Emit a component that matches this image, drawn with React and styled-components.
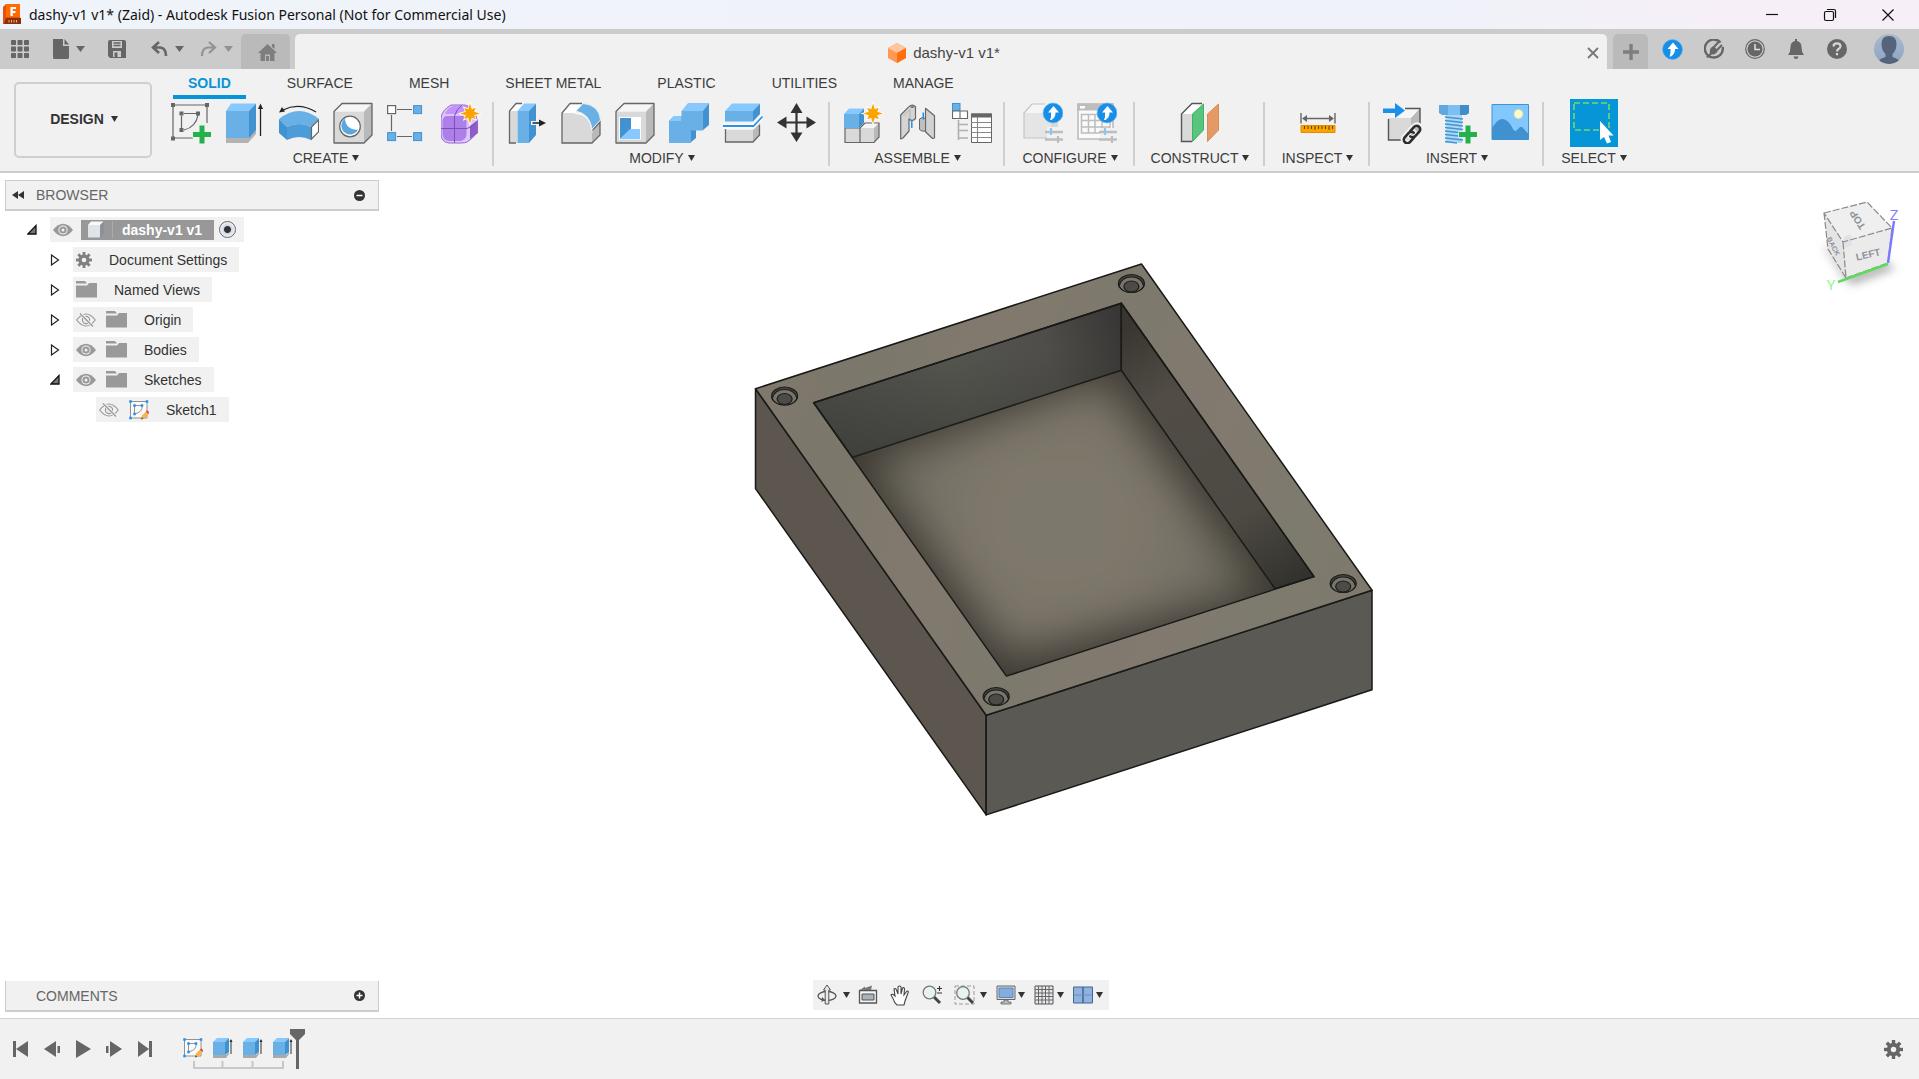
import React from 'react';
import styled, { createGlobalStyle } from 'styled-components';

const Global = createGlobalStyle`
  *, *::before, *::after { box-sizing: border-box; }
  html, body { margin: 0; height: 100%; }
  #root { height: 100%; }
  body { font-family: "Liberation Sans", Arial, sans-serif; font-size: 14px; color: #333; overflow: hidden; }
  button, input { font: inherit; color: inherit; }
  svg { display: block; flex: none; }
`;

const Shell = styled.div`
  height: 100vh;
  display: flex;
  flex-direction: column;
  background: #fff;
`;

const PlainButton = styled.button`
  border: 0;
  padding: 0;
  margin: 0;
  background: none;
  display: flex;
  align-items: center;
  justify-content: center;
`;

/* ---------- window title bar ---------- */
const TitleBar = styled.header`
  height: 29px;
  flex: none;
  display: flex;
  align-items: center;
  gap: 7px;
  padding: 0 2px 0 3px;
  background: linear-gradient(90deg, #eff3fa 0%, #f0f2f9 75%, #f6eff7 90%);
`;
const WindowTitle = styled.h1`
  margin: 0;
  flex: 1;
  font: 400 14px/20px "Noto Sans", "Open Sans", sans-serif;
  color: #111;
  white-space: nowrap;
`;
const WindowButtons = styled.div`
  display: flex;
`;
const WindowButton = styled(PlainButton)`
  width: 58px;
  height: 29px;
`;

/* ---------- document bar ---------- */
const DocBar = styled.div`
  height: 40px;
  flex: none;
  display: flex;
  align-items: flex-end;
  background: #cbcbcb;
  color: #666;
`;
const QuickTools = styled.div`
  height: 40px;
  width: 241px;
  display: flex;
  align-items: center;
  padding-left: 10px;
  color: #666;
`;
const QuickButton = styled(PlainButton)`
  width: ${p => p.$w || 20}px;
  height: 24px;
  gap: ${p => p.$inner || 0}px;
  margin-right: ${p => p.$gap || 0}px;
  color: ${p => (p.$dim ? '#929292' : '#666')};
`;
const SmallTab = styled(PlainButton)`
  height: 35px;
  width: ${p => p.$w}px;
  padding-left: ${p => p.$pad || 0}px;
  border-radius: 5px 5px 0 0;
  background: #bababa;
  color: #7e7e7e;
`;
const DocTab = styled.div`
  flex: 1;
  height: 35px;
  margin: 0 6px 0 5px;
  border-radius: 5px 5px 0 0;
  background: #f1f1f1;
  display: flex;
  align-items: center;
  padding: 2px 6px 0 8px;
`;
const DocName = styled.div`
  flex: 1;
  display: flex;
  align-items: center;
  justify-content: center;
  gap: 7px;
  font-size: 15px;
  line-height: 20px;
  color: #444;
`;
const CloseTab = styled(PlainButton)`
  width: 16px;
  height: 20px;
`;
const StatusIcons = styled.div`
  height: 40px;
  display: flex;
  align-items: center;
  padding: 0 15px 0 14px;
`;
const StatusButton = styled(PlainButton)`
  width: 21px;
  height: 24px;
  margin-right: 20px;
  color: #666;
`;
const Avatar = styled(PlainButton)`
  width: 30px;
  height: 30px;
  margin-left: 7px;
`;

/* ---------- ribbon ---------- */
const Ribbon = styled.div`
  flex: none;
  height: 104px;
  display: flex;
  background: #f1f1f1;
  border-bottom: 2px solid #cdcdcd;
`;
const Workspace = styled(PlainButton)`
  width: 138px;
  height: 76px;
  margin: 13px 19px 0 14px;
  padding: 0 0 2px 2px;
  gap: 7px;
  border: 2px solid #cfcfcf;
  border-radius: 5px;
  font-weight: 700;
  color: #333;
`;
const RibbonBody = styled.div`
  flex: 1;
  min-width: 0;
`;
const RibbonTabs = styled.nav`
  display: flex;
  gap: 26px;
  padding-left: 2px;
`;
const RibbonTab = styled(PlainButton)`
  height: 30px;
  padding: 2px 15px 0;
  font-weight: ${p => (p.$on ? 700 : 400)};
  color: ${p => (p.$on ? '#0696d7' : '#3c3c3c')};
  border-bottom: 4px solid ${p => (p.$on ? '#0696d7' : 'transparent')};
  white-space: nowrap;
`;
const Groups = styled.div`
  display: flex;
  align-items: center;
  height: 70px;
`;
const Group = styled.section`
  padding: 0 11px 0 ${p => (p.$first ? 0 : 13)}px;
`;
const GroupInner = styled.div`
  min-width: ${p => p.$min || 0}px;
  display: flex;
  flex-direction: column;
  align-items: center;
`;
const Divider = styled.div`
  width: 2px;
  height: 64px;
  background: #cfcfcf;
`;
const ToolRow = styled.div`
  height: 48px;
  display: flex;
  align-items: center;
  gap: 14px;
`;
const Tool = styled(PlainButton)`
  width: ${p => (p.$big ? 48 : 40)}px;
  height: ${p => (p.$big ? 48 : 42)}px;
  background: ${p => (p.$big ? '#0696d7' : 'none')};
`;
const GroupLabel = styled(PlainButton)`
  height: 22px;
  gap: 4px;
  color: #3c3c3c;
  white-space: nowrap;
`;

/* ---------- canvas ---------- */
const Canvas = styled.main`
  flex: 1;
  min-height: 0;
  position: relative;
  display: grid;
  grid-template-columns: 374px 1fr 374px;
  padding: 7px 5px 6px;
`;
const Model = styled.svg`
  position: absolute;
  left: calc(50% - 207px);
  top: 89px;
`;
const LeftDock = styled.aside`
  display: flex;
  flex-direction: column;
  justify-content: space-between;
  position: relative;
`;
const PanelHead = styled.div`
  height: 31px;
  display: flex;
  align-items: center;
  padding: 0 13px 0 6px;
  background: #f1f1f1;
  border: 1px solid #cdcdcd;
  border-top-width: ${p => (p.$open ? 1 : 0)}px;
  border-bottom-width: 2px;
  color: #666;
`;
const PanelTitle = styled.h2`
  margin: 0;
  flex: 1;
  padding-left: ${p => (p.$pad ? 24 : 12)}px;
  font-size: 14px;
  font-weight: 400;
  line-height: 20px;
`;
const Tree = styled.ul`
  list-style: none;
  margin: 0;
  padding: 6px 0 0;
  display: flex;
  flex-direction: column;
  gap: 5px;
`;
const TreeItem = styled.li`
  display: flex;
  align-items: center;
  height: 25px;
  padding-left: ${p => 20 + p.$level * 23}px;
`;
const Twisty = styled(PlainButton)`
  width: 14px;
  height: 20px;
  margin-right: 11px;
`;
const TreeCells = styled.div`
  height: 25px;
  display: flex;
  align-items: center;
  gap: ${p => (p.$root ? 8 : 10)}px;
  padding: 0 ${p => (p.$root ? 7 : 12)}px 0 3px;
  background: #f1f1f1;
  color: #333;
`;
const TreeName = styled.span`
  padding-left: 7px;
  line-height: 20px;
  white-space: nowrap;
`;
const Selected = styled.div`
  height: 20px;
  display: flex;
  align-items: center;
  background: #989898;
  color: #fff;
  font-weight: 700;
`;
const SelectedIcon = styled.span`
  width: 32px;
  padding-left: 6px;
  border-right: 1px solid #ababab;
`;
const SelectedName = styled.span`
  padding: 0 12px 0 9px;
  line-height: 20px;
  white-space: nowrap;
`;
const Radio = styled.input`
  appearance: none;
  width: 17px;
  height: 17px;
  margin: 0 1px 0 -3px;
  border: 1px solid #666;
  border-radius: 50%;
  background: radial-gradient(circle, #333 0 3px, #cfd9e6 4px, #f5f7fa 8px);
`;
const CenterDock = styled.div`
  display: flex;
  align-items: flex-end;
  justify-content: center;
  position: relative;
  padding: 0 0 2px 3px;
`;
const NavBar = styled.div`
  height: 30px;
  display: flex;
  align-items: center;
  padding: 0 6px 0 4px;
  background: #f1f1f1;
`;
const NavButton = styled(PlainButton)`
  height: 26px;
  gap: ${p => p.$inner || 0}px;
  margin-right: ${p => p.$gap || 0}px;
`;
const RightDock = styled.aside`
  display: flex;
  justify-content: flex-end;
  align-items: flex-start;
  position: relative;
`;

/* ---------- timeline ---------- */
const Timeline = styled.footer`
  flex: none;
  height: 61px;
  display: flex;
  align-items: center;
  background: #f1f1f1;
  border-top: 1px solid #d2d2d2;
  padding: 0 16px 0 13px;
  color: #666;
`;
const Playback = styled.div`
  display: flex;
  gap: 15px;
  margin-right: 30px;
`;
const PlayButton = styled(PlainButton)`
  width: 16px;
  height: 20px;
`;
const Track = styled.div`
  flex: 1;
  display: flex;
  align-items: flex-start;
  height: 40px;
`;
const Features = styled.div`
  display: flex;
  flex-direction: column;
  margin-right: -3px;
`;
const FeatureRow = styled.div`
  display: flex;
  gap: 10px;
  height: 32px;
  align-items: center;
  padding-top: 6px;
`;

/* ---------- drawings ---------- */
const F = '#69b0e6', T = '#87c9ff', S = '#4192d0', G = '#d9d9d9', L = '#f6f6f6', D = '#b9b9b9', K = '#666';

const Svg = ({ w = 40, h = w, vb, children }) => (
  <svg width={w} height={h} viewBox={vb || `0 0 ${w} ${h}`} fill="none" aria-hidden="true">{children}</svg>
);
const Caret = ({ w = 7, h = 6, c = 'currentColor' }) => (
  <Svg w={w} h={h}><path d={`M0 0H${w}L${w / 2} ${h}Z`} fill={c} /></Svg>
);
const starPath = (cx, cy, r, q) => {
  const pts = [];
  for (let i = 0; i < 16; i++) {
    const a = (i * Math.PI) / 8 - Math.PI / 2;
    const k = i % 2 ? q : i % 4 ? r * 0.82 : r;
    pts.push(`${(cx + k * Math.cos(a)).toFixed(1)} ${(cy + k * Math.sin(a)).toFixed(1)}`);
  }
  return `M${pts.join('L')}Z`;
};
const Star = ({ x, y }) => <path d={starPath(x, y, 10, 4.6)} fill="#fba401" stroke="#fff" strokeWidth="1.500" paintOrder="stroke" />;
const Plus = ({ x, y }) => (
  <path d={`M${x - 2.5} ${y - 9}h5v6.5h6.5v5h-6.5v6.5h-5v-6.5h-6.5v-5h6.5Z`} fill="#23b14d" stroke="#f1f1f1" strokeWidth="1.500" paintOrder="stroke" />
);
const UpBadge = ({ x, y, r = 10 }) => (
  <g>
    <circle cx={x} cy={y} r={r} fill="#178fe8" stroke="#6db6ee" strokeWidth=".6" />
    <path d={`M${x + .5} ${y - 7}l5.5 6.5h-3.5q.2 5-4 7.500h-1.500q1.500-3 1-7.500h-3Z`} fill="#fff" />
  </g>
);
const sq = (x, y, f, s = 4) => <rect x={x - s / 2} y={y - s / 2} width={s} height={s} fill={f} />;

const SketchIcon = () => (
  <Svg w={40} h={42}>
    <path d="M4 3H34M2 5V36H22M36 5V21M13 11.500H25M10.500 14V26M27 13Q25 25 13 28" stroke={K} strokeWidth="1.200" />
    {sq(2, 3, K)}{sq(36, 3, K)}{sq(2, 36.5, K)}{sq(10.5, 11.5, K)}{sq(27, 11.5, K)}{sq(10.5, 28, K)}
    <Plus x={31} y={32.500} />
  </Svg>
);
const ExtrudeIcon = () => (
  <Svg w={40} h={42}>
    <path d="M1 36H23L31 27V32L23 41H1Z" fill="#b3b3b3" />
    <path d="M1 9H24V36H1Z" fill={F} /><path d="M1 9L6 1.500H31L24 9Z" fill={T} /><path d="M24 9L31 1.500V28L24 36Z" fill={S} />
    <path d="M35.500 34V5" stroke="#222" strokeWidth="1.300" /><path d="M35.500 1.500L33 7H38Z" fill="#222" />
  </Svg>
);
const RevolveIcon = () => (
  <Svg w={40} h={42}>
    <path d="M0 17Q20 1 40 17L32 25Q20 19 8 25Z" fill={F} />
    <path d="M0 17L8 25V38L0 31Z" fill={S} />
    <path d="M8 25Q20 19 32 25V38Q20 32 8 38Z" fill="#4b9cd9" />
    <path d="M32.500 25L39.500 18V30L32.500 37Z" fill="#fff" stroke={K} strokeWidth="1.200" />
    <path d="M37 10Q20 0 4 8" stroke="#222" strokeWidth="1.300" /><path d="M0 10.500L3 5L6 9.500Z" fill="#222" />
  </Svg>
);
const boxFrame = (
  <g>
    <path d="M1 9.500H31V41H1Z" fill={G} /><path d="M1 9.500L9 1.500H39L31 9.500Z" fill={L} /><path d="M31 9.500L39 1.500V33L31 41Z" fill={D} />
    <path d="M1 9.500L9 1.500H39V33L31 41H1Z" stroke={K} strokeWidth="1.300" strokeLinejoin="round" />
  </g>
);
const HoleIcon = () => (
  <Svg w={40} h={42}>{boxFrame}
    <circle cx="17" cy="24.500" r="10.300" fill="#fff" stroke={K} strokeWidth="1.200" />
    <path d="M12 16.800A8.700 8.700 0 1 0 25 27.500A11 11 0 0 1 12 16.800Z" fill="#5aa7e0" />
  </Svg>
);
const PatternIcon = () => (
  <Svg w={40} h={42}>
    <path d="M10 7.500H25M4.500 13V29M10 34.500H25" stroke={K} strokeWidth="1.200" />
    <rect x=".6" y="3.600" width="8" height="8" fill="#fff" stroke={K} strokeWidth="1.200" />
    <rect x="26.600" y="3.600" width="8" height="8" fill={F} stroke={S} /><rect x=".6" y="30.600" width="8" height="8" fill={F} stroke={S} />
    <rect x="26.600" y="30.600" width="8" height="8" fill={F} stroke={S} />
  </Svg>
);
const FormIcon = () => (
  <Svg w={40} h={42}>
    <path d="M0 16Q1 8 10 3H24Q34 5 36 18V31Q31 37 26 40Q24 41 20 41H8Q0 40 0 32Z" fill="#dcc6fb" />
    <path d="M4 12Q6 6 12 4H30Q26 8 24 12Z" fill="#c294fb" />
    <path d="M5 14H22Q25.500 15 25.500 20V33Q24 39 18 39H8Q1.500 38 1.500 31V19Q2 15 5 14Z" fill="#ad7fe8" />
    <path d="M29 24L37 18V31L29 37Z" fill="#8d5cc8" />
    <path d="M13.500 41V14Q15 8 21 3M0 26.500H26Q31 25 36 20" stroke="#7d4fb5" strokeWidth="1" />
    <path d="M0 16Q1 8 10 3H24Q34 5 36 18V31Q31 37 26 40Q24 41 20 41H8Q0 40 0 32Z" stroke="#9566d0" />
    <Star x={29} y={11.500} />
  </Svg>
);
const PressPullIcon = () => (
  <Svg w={40} h={42}>
    <path d="M2.500 9L9 2H17L10 9V41H2.500Z" fill={G} /><path d="M2.500 9L9 2H17L10 9Z" fill="#fff" />
    <path d="M15 1.500H9L2.500 9V41H9" stroke={K} strokeWidth="1.300" />
    <path d="M10.500 9H22V41H10.500Z" fill={F} /><path d="M10.500 9L17 1.500H29L22 9Z" fill={T} /><path d="M22 9L29 1.500V33L22 41Z" fill={S} />
    <path d="M24 21H33" stroke="#f1f1f1" strokeWidth="4" /><path d="M25.500 21H34" stroke="#222" strokeWidth="1.500" /><path d="M32 17.500L39 21L32 24.500Z" fill="#222" />
  </Svg>
);
const FilletIcon = () => (
  <Svg w={40} h={42}>
    <path d="M1 11L9 1.500H22L14 11Z" fill="#fff" /><path d="M1 11H13Q30 12 31 31V41H1Z" fill={G} /><path d="M31 31L39 20V32L31 41Z" fill={D} />
    <path d="M21 1.500H9L1 11V41H31L39 33V20L31 29" stroke={K} strokeWidth="1.300" /><path d="M13 11Q30 12 31 29" stroke="#fff" strokeWidth="1" />
    <path d="M15 9L22 1.500Q38 3 39.500 18L31 27Q29 12 15 9Z" fill={F} stroke="#f1f1f1" strokeWidth=".8" />
  </Svg>
);
const ShellIcon = () => (
  <Svg w={40} h={42}>{boxFrame}
    <path d="M4 15H26V37.500H4Z" fill="#fff" /><path d="M5 16H16V27L5 37Z" fill={S} /><path d="M15 27H25V37H5Z" fill={T} />
  </Svg>
);
const CombineIcon = () => (
  <Svg w={40} h={42}>
    <path d="M0 19L5 14H13V9L19 1.500H40V23L34 28H27V36L21 41H0Z" fill={S} />
    <path d="M0 19H12.500V9H34V28.500H22V41H0Z" fill={F} /><path d="M0 19L5 14H12.500V19ZM12.500 9L19 1.500H40L34 9Z" fill={T} />
  </Svg>
);
const SplitIcon = () => (
  <Svg w={40} h={42}>
    <path d="M2 28H30V40H2Z" fill={G} /><path d="M30 28L37 21V33L30 40Z" fill={D} /><path d="M2.500 27V40H30L36.500 33V23" stroke={K} strokeWidth="1.300" />
    <path d="M2 9H30V19.500H2Z" fill={F} /><path d="M2 9L9 1.500H37L30 9Z" fill={T} /><path d="M30 9L37 1.500V12L30 19.500Z" fill={S} />
    <path d="M0 24H30.500L39.500 14.500" stroke="#fff" strokeWidth="5" /><path d="M0 24H30.500L39.500 14.500" stroke="#2b93e3" strokeWidth="1.800" />
  </Svg>
);
const MoveIcon = () => (
  <Svg w={40} h={42}>
    <path d="M19.500 8V34M7 20.500H33" stroke="#333" strokeWidth="2.200" />
    <path d="M19.500 1L25.500 11H13.500ZM19.500 40L25.500 30.500H13.500ZM0 20.500L9.500 14.500V26.500ZM39 20.500L29.500 14.500V26.500Z" fill="#333" />
  </Svg>
);
const ComponentIcon = () => (
  <Svg w={40} h={42}>
    <path d="M1 26H30V40.500H1Z" fill={G} /><path d="M16 26L21 21H35L30 26Z" fill={L} /><path d="M30 26L35 21V35L30 40.500Z" fill={D} />
    <path d="M1 26V40.500H30L35 35V21H21L16 26V40.500M1 26H16" stroke={K} strokeWidth="1.200" />
    <path d="M0 12H15V26H0Z" fill={F} /><path d="M0 12L5 6.500H20L15 12Z" fill={T} /><path d="M15 12L20 6.500V21L15 26Z" fill={S} />
    <Star x={29} y={11.500} />
  </Svg>
);
const JointIcon = () => (
  <Svg w={40} h={42}>
    <path d="M2.700 13L11 4.700Q14.500 1.500 17.500 4.700V16.500Q14.500 20 11 17V29L5 36L2.700 37Z" fill="#d4d4d4" stroke={K} strokeWidth="1.200" strokeLinejoin="round" />
    <path d="M5.500 14L12 7.500V17" stroke="#aaa" strokeWidth=".8" /><ellipse cx="14.300" cy="5" rx="2" ry="1" fill="#777" />
    <path d="M27.500 6.300L36.500 13.700V36L34.500 36.500L27.500 29.700Z" fill="#d2d2d2" stroke={K} strokeWidth="1.200" strokeLinejoin="round" />
    <path d="M21.500 17Q24 14.500 27.500 16.500V29Q24 30 21.500 27.500Z" fill="#bfbfbf" stroke={K} /><path d="M13.800 18.500V26M25.300 10.500V17.500" stroke="#2090e8" strokeWidth="1.500" />
  </Svg>
);
const ComponentTableIcon = () => (
  <Svg w={40} h={42}>
    <rect x=".5" y="1.500" width="7.500" height="7.500" fill={F} stroke={S} />
    <path d="M.500 9H8V16.500H.500ZM8 9H15.500V16.500H8Z" fill="#fff" stroke={K} strokeWidth="1.100" />
    <path d="M6.500 18V38M6.500 22.500H16M6.500 28.500H16M6.500 36H16" stroke="#b0b0b0" strokeWidth="1.600" />
    <path d="M19.500 12H39.500V40.500H19.500Z" fill="#fff" stroke={K} /><path d="M19 11.500H40V15.500H19Z" fill={K} />
    <path d="M19 20.500H39M19 25.500H39M19 30.500H39M19 35.500H39M25.500 15V40" stroke="#888" strokeWidth="1.100" />
  </Svg>
);
const sliders = <path d="M22 30H40M22 37.500H40" stroke="#bdbdbd" strokeWidth="2.400" />;
const ConfigIcon = () => (
  <Svg w={40} h={42}>
    <path d="M1 11H28V36H1Z" fill="#e5e5e5" /><path d="M1 11L9 2H36L28 11Z" fill="#f5f5f5" /><path d="M28 11L35 3V32L28 36Z" fill="#d8d8d8" />
    <path d="M22 2H9L1 11V36H24" stroke="#c4c4c4" strokeWidth="1.200" />
    <path d="M24 25H40V41H24Z" fill="#f1f1f1" />{sliders}<path d="M28 26V33" stroke="#8cc6ef" strokeWidth="2.200" /><path d="M35 34V41" stroke="#bdbdbd" strokeWidth="2.200" />
    <UpBadge x={30} y={11} />
  </Svg>
);
const ConfigTableIcon = () => (
  <Svg w={40} h={42}>
    <path d="M1 2H36V37H1Z" fill="#fafafa" stroke="#bdbdbd" strokeWidth="1.600" /><path d="M0 1.500H37V8.500H0Z" fill="#bdbdbd" /><path d="M3 4H8V6.500H3Z" fill="#fff" />
    <path d="M4.500 12.500H33V31H4.500ZM4.500 18.500H33M4.500 25H33M11.500 12.500V31M18 12.500V31M25 12.500V31" stroke="#bdbdbd" strokeWidth="1.500" />
    <path d="M23 26H40V41H23Z" fill="#f1f1f1" />{sliders}<path d="M28 26V33" stroke="#8cc6ef" strokeWidth="2.200" /><path d="M35 34V41" stroke="#bdbdbd" strokeWidth="2.200" />
    <UpBadge x={30} y={11} />
  </Svg>
);
const PlaneIcon = () => (
  <Svg w={40} h={42}>
    <path d="M1.500 12L12 2H22L12 12V39H1.500Z" fill={G} /><path d="M1.500 12L12 2H22L12 12Z" fill="#fff" /><path d="M22 1.500H12L1.500 12V39.500H12" stroke="#555" strokeWidth="1.400" />
    <path d="M12.500 12L23.500 2V28L12.500 39.500Z" fill="#58c47c" stroke="#3eb268" /><path d="M27.500 12L38.500 2V28L27.500 39.500Z" fill="#e49a67" stroke="#dd8a50" />
  </Svg>
);
const MeasureIcon = () => (
  <Svg w={40} h={42}>
    <path d="M3 11V21.500M37 11V21.500M6 16.500H34" stroke={K} strokeWidth="1.400" /><path d="M4 16.500L9 13V20ZM36 16.500L31 13V20Z" fill={K} />
    <path d="M3 23.500H37V30.500H3Z" fill="#fba401" stroke="#e08f00" />
    <path d="M6.500 24V27M10 24V27M13.500 24V27M17 24V28M20.500 24V27M24 24V27M27.500 24V27M31 24V28M34.500 24V27" stroke="#6a4700" strokeWidth="1.100" />
  </Svg>
);
const InsertIcon = () => (
  <Svg w={40} h={42}>
    <path d="M5 16H28V38H5Z" fill={G} /><path d="M5 16L14 6.500H37L28 16Z" fill={L} /><path d="M28 16L37 6.500V28L28 38Z" fill={D} />
    <path d="M22 6.500H37V22M5.500 17V38H19" stroke="#555" strokeWidth="1.400" />
    <path d="M0 6.500H12V1L22 8.500L12 16V11H0Z" fill="#1b90e8" />
    <g transform="rotate(-48 29 32.500)" strokeLinecap="round"><path d="M17.500 32.500a4.500 4.500 0 0 1 4.500-4.500h6a4.500 4.500 0 0 1 0 9h-6a4.500 4.500 0 0 1-4.500-4.500ZM26 32.500a4.500 4.500 0 0 1 4.500-4.500h6a4.500 4.500 0 0 1 0 9h-6a4.500 4.500 0 0 1-4.500-4.500Z" stroke="#f1f1f1" strokeWidth="4.500" /><path d="M28 36h-6a3.500 3.500 0 0 1 0-7h6a3.500 3.500 0 0 1 3.500 3.500M30 29h6a3.500 3.500 0 0 1 0 7h-6a3.500 3.500 0 0 1-3.500-3.500" stroke="#2d2d2d" strokeWidth="2.600" /></g>
  </Svg>
);
const BoltIcon = () => (
  <Svg w={40} h={42}>
    <path d="M2 3H32V11L29 13H5L2 11Z" fill="#5fa9de" /><path d="M11 3H23V13H11Z" fill="#7cc0f2" /><path d="M23 3H32V11L29 13H23Z" fill="#3f8ecb" />
    <path d="M9 13H25V41H9Z" fill="#a9d8fb" /><path d="M8 15L26 17M8 18.500L26 20.500M8 22L26 24M8 25.500L26 27.500M8 29L26 31M8 32.500L26 34.500M8 36L26 38M8 39.500L20 41" stroke="#4a94cc" strokeWidth="1.700" />
    <Plus x={31} y={32.500} />
  </Svg>
);
const ImageIcon = () => (
  <Svg w={40} h={42}>
    <path d="M1 2.500H37.500V37.500H1Z" fill="#82c8fd" stroke="#4192d0" /><circle cx="27.500" cy="12" r="4.500" fill="#fdfac6" stroke="#c9dfb6" />
    <path d="M1 26Q7 16 12 17Q18 18 22 27Q24 31 27 27Q30 23 32 26L37.500 32V37.500H1Z" fill="#3f92cf" />
  </Svg>
);
const SelectIcon = () => (
  <Svg w={48} h={48}>
    <path d="M4 4H39V31H4Z" stroke="#76d672" strokeWidth="1.600" strokeDasharray="6 3" />
    <path d="M30 22V41L34 38L37 44.500L41 43L38.500 36.500H43.500Z" fill="#fff" />
  </Svg>
);

const Logo = () => (
  <svg width="19" height="21" viewBox="0 0 19 21" role="img" aria-label="Fusion">
    <path d="M3 0H17V17L15 20H0V3Z" fill="#e35205" /><path d="M3 0H17V13H3Z" fill="#ff6b00" /><path d="M3 14H18V20H1Z" fill="#8c2f06" />
    <path d="M7.500 3H13V5H9.800V7H12.500V9H9.800V12H7.500Z" fill="#fff" /><path d="M6 16V18.500M8.500 16V18.500M11 16V18.500M13.500 16V18.500" stroke="#e8b79c" />
  </svg>
);
const Gear = ({ s = 18, c = '#666' }) => (
  <Svg w={s} vb="0 0 18 18">
    <g stroke={c} strokeWidth="3.200">{[0, 45, 90, 135].map(a => <path key={a} d="M9 0V18" transform={`rotate(${a} 9 9)`} />)}</g>
    <circle cx="9" cy="9" r="6.300" fill={c} /><circle cx="9" cy="9" r="2.600" fill="#f1f1f1" />
  </Svg>
);
const Eye = () => (
  <Svg w={20} h={14}><path d="M0 7Q10-5.500 20 7Q10 19.500 0 7Z" fill="#999" /><circle cx="10" cy="7" r="4.600" fill="#f1f1f1" /><circle cx="10" cy="7" r="3.600" fill="#999" /><circle cx="10" cy="7" r="1.500" fill="#f1f1f1" /></Svg>
);
const EyeOff = () => (
  <Svg w={20} h={14}><path d="M.700 7Q10-5 19.300 7Q10 19 .700 7Z" stroke="#999" strokeWidth="1.200" /><circle cx="10" cy="7" r="3.600" stroke="#999" strokeWidth="1.200" /><circle cx="10" cy="7" r="1.200" fill="#999" /><path d="M4 0L17 13.500" stroke="#f1f1f1" strokeWidth="3" /><path d="M4 .500L17 13.500" stroke="#999" strokeWidth="1.200" /></Svg>
);
const Folder = () => (
  <Svg w={21} h={17}><path d="M0 0H9L11 2.500H0Z" fill="#999" /><path d="M0 4.500H11L13 2H21V16.500H0Z" fill="#999" /></Svg>
);
const SketchSmall = () => (
  <Svg w={20} h={20}>
    <path d="M1.500 1.500H18V18H1.500ZM5.500 5.500H13Q14 12 5.500 14Z" fill="#fafafa" stroke="#888" strokeWidth=".9" />
    {[[1.5, 1.5], [18, 1.5], [1.5, 18], [5.5, 5.5], [13, 5.5], [5.5, 14]].map(([x, y]) => <rect key={x + '-' + y} x={x - 1.25} y={y - 1.25} width="2.500" height="2.500" fill="#1b90f0" />)}
    <path d="M12 19.500L13 15.500L17 11.500L19.500 14L15.500 18.500Z" fill="#f7b740" /><path d="M17 11.500L18 10.500Q20 10.500 20 13L19.300 14Z" fill="#ef3340" /><path d="M12 19.500L12.800 17L14.500 18.800Z" fill="#555" />
  </Svg>
);
const ExtrudeSmall = () => (
  <Svg w={20} h={20}>
    <path d="M0 17H13L16 14V16L13 20H0Z" fill="#aaa" /><path d="M0 4H12V17H0Z" fill={F} /><path d="M0 4L4 0H16L12 4Z" fill={T} /><path d="M12 4L16 0V14L12 17Z" fill={S} />
    <path d="M18 16V2" stroke="#333" strokeWidth="1" /><path d="M16.500 4L18 1L19.500 4Z" fill="#333" />
  </Svg>
);
const Marker = () => <Svg w={15} h={40}><path d="M0 0H15V5L9 11V40H6V11L0 5Z" fill="#666" /></Svg>;

const Plate = () => (
  <Model width="620" height="556" viewBox="753 262 620 556" role="img" aria-label="Enclosure model">
    <defs>
      <linearGradient id="top" gradientUnits="userSpaceOnUse" x1="760" y1="390" x2="1370" y2="600">
        <stop offset="0" stopColor="#80786c" /><stop offset=".15" stopColor="#7b776b" /><stop offset=".3" stopColor="#82796e" /><stop offset=".5" stopColor="#7d796d" />
        <stop offset=".7" stopColor="#82796f" /><stop offset=".85" stopColor="#7d7a6e" /><stop offset="1" stopColor="#80796d" />
      </linearGradient>
      <linearGradient id="back" gradientUnits="userSpaceOnUse" x1="820" y1="430" x2="1125" y2="340">
        <stop offset="0" stopColor="#494b46" /><stop offset=".45" stopColor="#555550" /><stop offset=".75" stopColor="#4f4e4a" /><stop offset="1" stopColor="#383735" />
      </linearGradient>
      <linearGradient id="backDown" x1="0" y1="0" x2=".15" y2="1"><stop offset=".4" stopColor="#33332e" stopOpacity="0" /><stop offset="1" stopColor="#33332e" stopOpacity=".5" /></linearGradient>
      <linearGradient id="side" gradientUnits="userSpaceOnUse" x1="1121" y1="330" x2="1300" y2="590">
        <stop offset="0" stopColor="#39362f" /><stop offset=".25" stopColor="#514d46" /><stop offset=".7" stopColor="#4d4a43" /><stop offset="1" stopColor="#302f2b" />
      </linearGradient>
      <clipPath id="floorClip"><path d="M852.400 457.200L1121.300 370.200L1275 588.800L1006.400 676.100Z" /></clipPath>
      <filter id="soft" x="-30%" y="-30%" width="160%" height="160%"><feGaussianBlur stdDeviation="22" /></filter>
      <radialGradient id="floorTone" gradientUnits="userSpaceOnUse" cx="1060" cy="520" r="170"><stop offset="0" stopColor="#7d796d" /><stop offset=".55" stopColor="#7d766b" /><stop offset="1" stopColor="#716d62" /></radialGradient>
    </defs>
    <g stroke="#191917" strokeWidth="1.500" strokeLinejoin="round">
      <path d="M755.500 388.700L986.200 715.300V814.900L755.500 488.600Z" fill="#5c564f" />
      <path d="M986.200 715.300L1372 590.300V689.800L986.200 814.900Z" fill="#5a5953" />
      <path d="M755.500 388.700L1141.500 264L1372 590.300L986.200 715.300Z" fill="url(#top)" />
      <g clipPath="url(#floorClip)" stroke="none">
        <path d="M852 457L1121 370L1275 589L1006 676Z" fill="#3c3932" />
        <path d="M868 462L1105 376L1260 592L1008 658Z" fill="url(#floorTone)" filter="url(#soft)" />
      </g>
      <path d="M813.700 402.800L1121.300 303.300V370.200L852.400 457.200Z" fill="url(#back)" />
      <path d="M813.700 402.800L1121.300 303.300V370.200L852.400 457.200Z" fill="url(#backDown)" stroke="none" />
      <path d="M1121.300 303.300L1314 576.600L1275 588.800L1121.300 370.200Z" fill="url(#side)" />
      <path d="M813.700 402.800L1121.300 303.300L1314 576.600L1006.400 676.100Z" fill="none" />
    </g>
    {[[784.6, 396], [1131.4, 283.5], [1343.2, 583.5], [996.2, 696.5]].map(([x, y]) => (
      <g key={x} stroke="#1c1c1a" strokeWidth="1.200">
        <ellipse cx={x} cy={y} rx="13" ry="9" fill="#474640" />
        <path d={`M${x - 12.4} ${y + 2.5}Q${x - 10} ${y - 6.5} ${x} ${y - 6.5}T${x + 12.4} ${y + 2.5}Q${x + 9} ${y + 9} ${x} ${y + 9}T${x - 12.4} ${y + 2.5}Z`} fill="#7a756a" />
        <ellipse cx={x} cy={y + 3} rx="7.500" ry="5.500" fill="#4c4b47" />
      </g>
    ))}
  </Model>
);

const ViewCube = () => (
  <svg width="134" height="130" viewBox="0 0 134 130" role="img" aria-label="View cube">
    <defs><filter id="cubeShadow" x="-30%" y="-30%" width="160%" height="160%"><feGaussianBlur stdDeviation="5" /></filter></defs>
    <path d="M46 66L66 98L106 84L112 88L72 103Z" stroke="#aaa" strokeWidth="3" fill="#aaa" filter="url(#cubeShadow)" />
    <path d="M44 33L87 22L112 48L63 62Z" fill="#efeff0" /><path d="M44 33L63 62L66 98L48 69Z" fill="#e4e4e5" /><path d="M63 62L112 48L108 83L66 98Z" fill="#ebebec" />
    <path d="M64 57L71 54L72 66L64 68Z" fill="#dfe3e8" />
    <path d="M44 33L87 22L112 48L63 62ZM44 33L48 69L66 98L63 62M66 98L108 83L112 48" fill="none" stroke="#8a8a8a" strokeWidth="1.200" strokeDasharray="7 2" />
    <g fontFamily="Liberation Sans, sans-serif" fontWeight="700" fill="#8d9299" textAnchor="middle">
      <text x="77" y="44" fontSize="10" transform="rotate(237 77 40)">TOP</text>
      <text x="88" y="78" fontSize="10" transform="rotate(-13 88 74)">LEFT</text>
      <text x="54" y="69" fontSize="7" transform="rotate(62 54 66)">BACK</text>
    </g>
    <path d="M108 83L114 41" stroke="#7a7aff" strokeWidth="2.400" /><path d="M58 102L108 84" stroke="#5fdc5f" strokeWidth="2.400" />
    <g fontFamily="Open Sans, sans-serif" fontSize="15" textAnchor="middle"><text x="114" y="40" fill="#8080ff">Z</text><text x="51" y="110" fill="#84f684">Y</text></g>
  </svg>
);

const WinIcon = ({ d }) => <Svg w={14} h={14}><path d={d} stroke="#111" strokeWidth="1.200" /></Svg>;

const GROUPS = [
  { name: 'CREATE', first: true, tools: [['Create Sketch', SketchIcon], ['Extrude', ExtrudeIcon], ['Revolve', RevolveIcon], ['Hole', HoleIcon], ['Rectangular Pattern', PatternIcon], ['Create Form', FormIcon]] },
  { name: 'MODIFY', tools: [['Press Pull', PressPullIcon], ['Fillet', FilletIcon], ['Shell', ShellIcon], ['Combine', CombineIcon], ['Split Body', SplitIcon], ['Move/Copy', MoveIcon]] },
  { name: 'ASSEMBLE', min: 149, tools: [['New Component', ComponentIcon], ['Joint', JointIcon], ['Component Table', ComponentTableIcon]] },
  { name: 'CONFIGURE', min: 104, tools: [['Configure', ConfigIcon], ['Configuration Table', ConfigTableIcon]] },
  { name: 'CONSTRUCT', min: 104, tools: [['Offset Plane', PlaneIcon]] },
  { name: 'INSPECT', min: 79, tools: [['Measure', MeasureIcon]] },
  { name: 'INSERT', tools: [['Insert Derive', InsertIcon], ['Insert Fastener', BoltIcon], ['Canvas', ImageIcon]] },
  { name: 'SELECT', min: 74, big: true, tools: [['Select', SelectIcon]] },
];

const TREE = [
  { name: 'Document Settings', level: 1, icon: <Gear s={16} c="#808080" /> },
  { name: 'Named Views', level: 1, icon: <Folder /> },
  { name: 'Origin', level: 1, eye: 'off', icon: <Folder /> },
  { name: 'Bodies', level: 1, eye: 'on', icon: <Folder /> },
  { name: 'Sketches', level: 1, eye: 'on', icon: <Folder />, open: true },
  { name: 'Sketch1', level: 2, eye: 'off', icon: <SketchSmall />, leaf: true },
];

const TwistyIcon = ({ open }) => (
  <Svg w={10} h={12}>{open ? <path d="M9 1.500V10H.800Z" fill="#777" stroke="#111" strokeWidth="1.300" /> : <path d="M1.500 1L8.500 6L1.500 11Z" fill="#fff" stroke="#222" strokeWidth="1.200" />}</Svg>
);

const NAV = [
  ['Orbit', <Svg w={20} h={22}><ellipse cx="10" cy="12" rx="9" ry="4.500" stroke="#555" strokeWidth="1.300" /><path d="M10 1L13.500 6H11.800V20H8.200V6H6.500Z" fill="#e5e8ec" stroke="#555" /><path d="M5 13L8 16L4.500 18Z" fill="#555" /></Svg>, 6, 8],
  ['Look At', <Svg w={20} h={20}><path d="M1.500 5.500H18.500V18H1.500Z" fill="#f5f5f5" stroke="#555" strokeWidth="1.300" /><path d="M4 9H16V15H4Z" fill="#a9b1ba" stroke="#555" /><path d="M2 5L7 1.500V3L14 .5L13 5Z" fill="#777" /></Svg>, 0, 12],
  ['Pan', <Svg w={20} h={21}><path d="M5 18Q3 13 1 10Q2 8 5 11L4 4Q5.500 3 6.500 5L8 9L8 2Q9.500 0 11 2V9L12.500 3Q14.500 2 14.500 4L14 10L17 6Q19 6 18 8L15 16L14 20H7Z" fill="#fff" stroke="#444" strokeWidth="1.100" /></Svg>, 0, 12],
  ['Zoom', <Svg w={21} h={20}><path d="M11 11L18 18" stroke="#444" strokeWidth="3" /><circle cx="7.500" cy="7.500" r="6.300" fill="#e9f2f2" stroke="#777" strokeWidth="1.300" /><path d="M15 3.500H20M17.500 1V6M15 8H20" stroke="#333" strokeWidth="1.100" /></Svg>, 0, 11],
  ['Fit', <Svg w={21} h={20}><path d="M1 1H20V19H1Z" stroke="#999" strokeDasharray="4 2" /><path d="M12 11L19 18" stroke="#444" strokeWidth="3" /><circle cx="9" cy="8" r="6.300" fill="#e9f2f2" stroke="#777" strokeWidth="1.300" /></Svg>, 5, 9],
  ['Display Settings', <Svg w={20} h={20}><path d="M1 1H19V14.500H1Z" fill="#ddd" stroke="#666" /><path d="M3 3H17V12.500H3Z" fill="#83acdf" stroke="#5d84b4" /><path d="M8 15H12V17H15V19H5V17H8Z" fill="#bbb" stroke="#666" strokeWidth=".8" /></Svg>, 2, 9],
  ['Grid and Snaps', <Svg w={20} h={20}><path d="M1 1H19V19H1Z" fill="#e6e8ec" stroke="#555" /><path d="M4.500 1V19M8 1V19M11.500 1V19M15 1V19M1 4.500H19M1 8H19M1 11.500H19M1 15H19" stroke="#666" strokeWidth="1" /></Svg>, 3, 9],
  ['Viewports', <Svg w={20} h={18}><path d="M.500 1H19.500V17H.500Z" fill="#8fb3e0" stroke="#45658c" /><path d="M10 1V17" stroke="#45658c" strokeWidth="1.500" /><path d="M1 9H19" stroke="#6d8fbb" strokeWidth="1" /></Svg>, 3, 0],
];

export default function App() {
  return (
    <Shell>
      <Global />
      <TitleBar>
        <Logo />
        <WindowTitle>dashy-v1 v1* (Zaid) - Autodesk Fusion Personal (Not for Commercial Use)</WindowTitle>
        <WindowButtons>
          <WindowButton aria-label="Minimize"><WinIcon d="M1 6.500H13" /></WindowButton>
          <WindowButton aria-label="Restore"><WinIcon d="M1.500 5Q1.500 3.500 3 3.500H9Q10.500 3.500 10.500 5V11Q10.500 12.500 9 12.500H3Q1.500 12.500 1.500 11ZM4 1.500H11Q12.500 1.500 12.500 3V10" /></WindowButton>
          <WindowButton aria-label="Close"><WinIcon d="M1.500 1.500L12.500 12.500M12.500 1.500L1.500 12.500" /></WindowButton>
        </WindowButtons>
      </TitleBar>

      <DocBar>
        <QuickTools>
          <QuickButton aria-label="Data panel" $gap={21}>
            <Svg w={18}>{[0, 6.5, 13].map(x => [0, 6.5, 13].map(y => <rect key={x + '-' + y} x={x} y={y} width="5" height="5" rx=".8" fill="currentColor" />))}</Svg>
          </QuickButton>
          <QuickButton aria-label="File" $w={35} $gap={22} $inner={6}>
            <Svg w={18} h={20}><path d="M1 0H11V7H17V18.500Q17 20 15.500 20H2.500Q1 20 1 18.500ZM12.500 0L17 5.500H12.500Z" fill="currentColor" /></Svg><Caret w={9} />
          </QuickButton>
          <QuickButton aria-label="Save" $w={18} $gap={24}>
            <Svg w={18}><path d="M0 2Q0 0 2 0H16Q18 0 18 2V18H2L0 16Z" fill="currentColor" /><path d="M4 1H14V8H4Z" fill="#cbcbcb" /><path d="M5.500 3H12.500M5.500 5.500H12.500" stroke="currentColor" strokeWidth="1.300" /><path d="M5 11H13V17H5Z" fill="#cbcbcb" /><path d="M6.500 12.500H9.500V18H6.500Z" fill="currentColor" /></Svg>
          </QuickButton>
          <QuickButton aria-label="Undo" $w={34} $gap={15} $inner={7}>
            <Svg w={17} h={16}><path d="M8 1L2 6.500L8 12M2.500 6.500H9Q15 7 15 15" stroke="currentColor" strokeWidth="2.600" /></Svg><Caret w={9} />
          </QuickButton>
          <QuickButton aria-label="Redo" $w={34} $dim $inner={7}>
            <Svg w={17} h={16}><path d="M9 1L15 6.500L9 12M14.500 6.500H8Q2 7 2 15" stroke="currentColor" strokeWidth="2.200" /></Svg><Caret w={9} />
          </QuickButton>
        </QuickTools>
        <SmallTab $w={49} $pad={4} aria-label="Home">
          <Svg w={19} h={20}><path d="M9.500 2L19 11H16.500V19H12V12.500H7V19H2.500V11H0ZM14 2H16.500V7L14 5Z" fill="currentColor" /><path d="M8 14H11V19H8Z" fill="currentColor" /></Svg>
        </SmallTab>
        <DocTab>
          <DocName>
            <Svg w={18} h={20}><path d="M9 0L18 5V15L9 20L0 15V5Z" fill="#ff9850" /><path d="M9 0L18 5L9 10L0 5Z" fill="#ffc5a0" /><path d="M9 10L18 5V15L9 20Z" fill="#ff6f0f" /></Svg>
            dashy-v1 v1*
          </DocName>
          <CloseTab aria-label="Close document"><Svg w={12}><path d="M1 1L11 11M11 1L1 11" stroke="#777" strokeWidth="1.800" /></Svg></CloseTab>
        </DocTab>
        <SmallTab $w={35} aria-label="New design"><Svg w={16}><path d="M8 0V16M0 8H16" stroke="currentColor" strokeWidth="3.400" /></Svg></SmallTab>
        <StatusIcons>
          <StatusButton aria-label="Updates"><Svg w={21}><UpBadge x={10.5} y={10.5} /></Svg></StatusButton>
          <StatusButton aria-label="Extensions"><Svg w={20}><path d="M16.500 3.500A9 9 0 1 0 18.700 8" stroke="currentColor" strokeWidth="2.400" /><path d="M2 18L6 14Q5 9 9.500 7L14 11.500Q12 16 7.500 15.500L4 19Z" fill="currentColor" /><path d="M10 8L14.500 3M13 11L18 6" stroke="currentColor" strokeWidth="2" /></Svg></StatusButton>
          <StatusButton aria-label="Job status"><Svg w={20}><circle cx="10" cy="10" r="9.300" stroke="currentColor" strokeWidth="1.200" /><circle cx="10" cy="10" r="7.500" fill="currentColor" /><path d="M10 5V10.500H15" stroke="#e2e2e2" strokeWidth="1.500" /></Svg></StatusButton>
          <StatusButton aria-label="Notifications"><Svg w={18} h={20}><path d="M8 0H10V2Q14.500 3 14.500 8Q14.500 13 17 16H1Q3.500 13 3.500 8Q3.500 3 8 2ZM6.500 17.500H11.500Q11 20 9 20T6.500 17.500Z" fill="currentColor" /></Svg></StatusButton>
          <StatusButton aria-label="Help"><Svg w={20}><circle cx="10" cy="10" r="10" fill="currentColor" /><path d="M6.500 7.500Q6.500 4.300 10 4.300T13.500 7.300Q13.500 9 11.500 10Q10 10.800 10 12.500" stroke="#d6d6d6" strokeWidth="2.200" /><path d="M8.900 14H11.100V16.300H8.900Z" fill="#d6d6d6" /></Svg></StatusButton>
          <Avatar aria-label="Account">
            <svg width="30" height="30" viewBox="0 0 30 30"><defs><clipPath id="av"><circle cx="15" cy="15" r="15" /></clipPath><linearGradient id="avbg" x1="0" y1="0" x2="0" y2="1"><stop offset="0" stopColor="#a9bace" /><stop offset="1" stopColor="#8fa3c2" /></linearGradient></defs>
              <g clipPath="url(#av)"><rect width="30" height="30" fill="url(#avbg)" /><path d="M15 2Q23 2 22.500 11Q22 17 18.500 20V23Q26 25 27 30H3Q4 25 11.500 23V20Q8 17 7.500 11Q7 2 15 2Z" fill="#55647b" /></g></svg>
          </Avatar>
        </StatusIcons>
      </DocBar>

      <Ribbon>
        <Workspace aria-haspopup="menu">DESIGN<Caret /></Workspace>
        <RibbonBody>
          <RibbonTabs>
            {['SOLID', 'SURFACE', 'MESH', 'SHEET METAL', 'PLASTIC', 'UTILITIES', 'MANAGE'].map((t, i) => <RibbonTab key={t} $on={i === 0}>{t}</RibbonTab>)}
          </RibbonTabs>
          <Groups>
            {GROUPS.map((g, i) => (
              <React.Fragment key={g.name}>
                {i > 0 && <Divider />}
                <Group $first={g.first}>
                  <GroupInner $min={g.min}>
                    <ToolRow>{g.tools.map(([n, Icon]) => <Tool key={n} $big={g.big} aria-label={n}><Icon /></Tool>)}</ToolRow>
                    <GroupLabel aria-haspopup="menu">{g.name}<Caret c="#333" /></GroupLabel>
                  </GroupInner>
                </Group>
              </React.Fragment>
            ))}
          </Groups>
        </RibbonBody>
      </Ribbon>

      <Canvas>
        <Plate />
        <LeftDock>
          <section>
            <PanelHead $open>
              <PlainButton aria-label="Collapse"><Svg w={12} h={8}><path d="M6 0V8L0 4ZM12 0V8L6 4Z" fill="#333" /></Svg></PlainButton>
              <PanelTitle>BROWSER</PanelTitle>
              <PlainButton aria-label="Minimize panel"><Svg w={11}><circle cx="5.500" cy="5.500" r="5.500" fill="#333" /><path d="M2.500 5.500H8.500" stroke="#fff" strokeWidth="1.500" /></Svg></PlainButton>
            </PanelHead>
            <Tree>
              <TreeItem $level={0}>
                <Twisty aria-label="Collapse dashy-v1"><TwistyIcon open /></Twisty>
                <TreeCells $root>
                  <PlainButton aria-label="Visibility"><Eye /></PlainButton>
                  <Selected>
                    <SelectedIcon><Svg w={18} h={17}><path d="M1 4L4 .500H17V12L14 16.500H1Z" fill="#8b9099" /><path d="M1 4H13V16.500H1Z" fill="#e0e4ea" /><path d="M1 4L4 .500H16.500L13 4Z" fill="#f7f9fb" /></Svg></SelectedIcon>
                    <SelectedName>dashy-v1 v1</SelectedName>
                  </Selected>
                  <Radio type="radio" name="active" defaultChecked aria-label="Activate dashy-v1" />
                </TreeCells>
              </TreeItem>
              {TREE.map(r => (
                <TreeItem key={r.name} $level={r.level}>
                  <Twisty as={r.leaf ? 'span' : undefined} aria-label={r.leaf ? undefined : r.name}>{!r.leaf && <TwistyIcon open={r.open} />}</Twisty>
                  <TreeCells>
                    {r.eye && <PlainButton aria-label={`Visibility of ${r.name}`}>{r.eye === 'on' ? <Eye /> : <EyeOff />}</PlainButton>}
                    {r.icon}
                    <TreeName>{r.name}</TreeName>
                  </TreeCells>
                </TreeItem>
              ))}
            </Tree>
          </section>
          <PanelHead>
            <PanelTitle $pad>COMMENTS</PanelTitle>
            <PlainButton aria-label="Expand comments"><Svg w={11}><circle cx="5.500" cy="5.500" r="5.500" fill="#333" /><path d="M2.500 5.500H8.500M5.500 2.500V8.500" stroke="#fff" strokeWidth="1.500" /></Svg></PlainButton>
          </PanelHead>
        </LeftDock>
        <CenterDock>
          <NavBar>
            {NAV.map(([n, icon, inner, gap]) => <NavButton key={n} aria-label={n} $inner={inner} $gap={gap}>{icon}{inner > 0 && <Caret c="#333" />}</NavButton>)}
          </NavBar>
        </CenterDock>
        <RightDock><ViewCube /></RightDock>
      </Canvas>

      <Timeline>
        <Playback>
          <PlayButton aria-label="To start"><Svg w={16}><path d="M0 0H3V16H0ZM15 0V16L3 8Z" fill="currentColor" /></Svg></PlayButton>
          <PlayButton aria-label="Step back"><Svg w={16}><path d="M12 0V16L0 8ZM13.500 5H16V12H13.500Z" fill="currentColor" /></Svg></PlayButton>
          <PlayButton aria-label="Play"><Svg w={16} h={20}><path d="M1 1L16 10L1 19Z" fill="currentColor" /></Svg></PlayButton>
          <PlayButton aria-label="Step forward"><Svg w={16}><path d="M4 0V16L16 8ZM0 5H2.500V12H0Z" fill="currentColor" /></Svg></PlayButton>
          <PlayButton aria-label="To end"><Svg w={16}><path d="M12 0H15V16H12ZM1 0V16L12 8Z" fill="currentColor" /></Svg></PlayButton>
        </Playback>
        <Track>
          <Features>
            <FeatureRow>
              <PlainButton aria-label="Sketch1"><SketchSmall /></PlainButton>
              <PlainButton aria-label="Extrude1"><ExtrudeSmall /></PlainButton>
              <PlainButton aria-label="Extrude2"><ExtrudeSmall /></PlainButton>
              <PlainButton aria-label="Extrude3"><ExtrudeSmall /></PlainButton>
            </FeatureRow>
            <Svg w={110} h={8}><path d="M11 0V7H100V0M39.500 0V7M69.500 0V7" stroke="#c8c8c8" strokeWidth="2" /></Svg>
          </Features>
          <Marker />
        </Track>
        <PlainButton aria-label="Timeline settings"><Gear s={19} /></PlainButton>
      </Timeline>
    </Shell>
  );
}
